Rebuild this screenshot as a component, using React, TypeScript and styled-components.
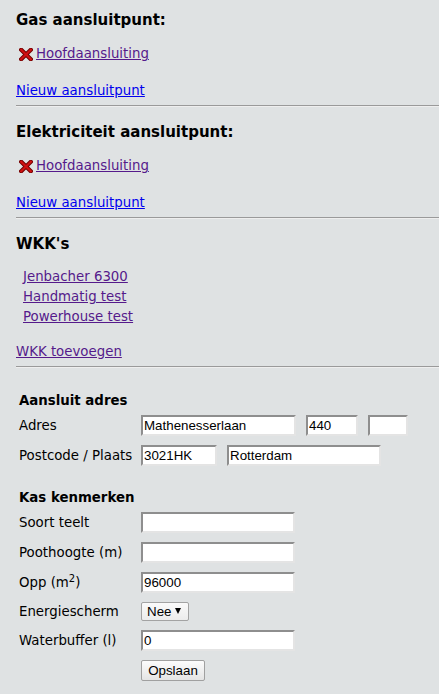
import React from 'react';
import styled, { createGlobalStyle } from 'styled-components';

const Global = createGlobalStyle`
  html, body { margin: 0; padding: 0; background: #dfe2e3; }
  body {
    font-family: "DejaVu Sans", Verdana, sans-serif;
    font-size: 13.33px;
    color: #000;
  }
`;

const Page = styled.div`
  display: flex;
  flex-direction: column;
  padding: 0 0 10px 16px;
  min-height: 694px;
  box-sizing: border-box;
  background: #dfe2e3;
`;

const SectionTitle = styled.h3<{ $first?: boolean }>`
  margin: ${(p) => (p.$first ? 11 : 16)}px 0 0;
  font-size: 15px;
  line-height: 18px;
  font-weight: bold;
`;

const Link = styled.a<{ $visited?: boolean }>`
  color: ${(p) => (p.$visited ? '#551a8b' : '#0000ee')};
  text-decoration: underline;
  cursor: pointer;
`;

const ItemRow = styled.div`
  margin-top: 17px;
  display: flex;
  align-items: flex-start;
  line-height: 15px;
  height: 15px;
`;

const DeleteIcon = styled.svg`
  width: 14px;
  height: 13px;
  margin: 2px 3px 0 3px;
  flex: none;
`;

const ActionLine = styled.div<{ $gap: number }>`
  margin-top: ${(p) => p.$gap}px;
  line-height: 15px;
`;

const Divider = styled.hr`
  margin: 7px 0 0;
  height: 0;
  border: 0;
  border-top: 1px solid #9a9a9a;
  border-bottom: 1px solid #eeeeee;
`;

const WkkList = styled.ul`
  list-style: none;
  margin: 14px 0 0;
  padding: 0 0 0 7px;
`;

const WkkItem = styled.li`
  line-height: 20px;
  height: 20px;
`;

const FormTitle = styled.div<{ $gap: number }>`
  margin: ${(p) => p.$gap}px 0 2px;
  padding-left: 3px;
  font-weight: bold;
  line-height: 15px;
`;

const FormRow = styled.div<{ $h?: number }>`
  display: grid;
  grid-template-columns: 122px 1fr;
  align-items: center;
  height: ${(p) => p.$h ?? 30}px;
  padding-left: 3px;
`;

const Label = styled.label`
  line-height: 15px;
  white-space: nowrap;
`;

const Sup = styled.sup`
  font-size: 10px;
  line-height: 0;
`;

const Controls = styled.div`
  display: flex;
  align-items: center;
  gap: 10px;
`;

const TextInput = styled.input<{ $w: number }>`
  box-sizing: border-box;
  width: ${(p) => p.$w}px;
  height: 21px;
  margin: 0;
  padding: 1px 1px;
  font-family: "Liberation Sans", Arial, sans-serif;
  font-size: 13.33px;
  color: #000;
  background: #fff;
  border: 2px solid;
  border-color: #8e8e8e #e4e4e4 #e4e4e4 #8e8e8e;
  outline: none;
`;

const SelectWrap = styled.div`
  position: relative;
  width: 48px;
  height: 19px;
`;

const Select = styled.select`
  appearance: none;
  -webkit-appearance: none;
  box-sizing: border-box;
  width: 48px;
  height: 19px;
  margin: 0;
  padding: 0 0 0 5px;
  font-family: "Liberation Sans", Arial, sans-serif;
  font-size: 13.33px;
  color: #000;
  border: 1px solid #a3a3a3;
  border-radius: 2px;
  background: linear-gradient(#fafafa, #ececec);
  outline: none;
`;

const SelectArrow = styled.span`
  position: absolute;
  right: 8px;
  top: 6px;
  width: 0;
  height: 0;
  border-left: 3px solid transparent;
  border-right: 3px solid transparent;
  border-top: 6px solid #000;
  pointer-events: none;
`;

const SaveButton = styled.button`
  box-sizing: border-box;
  width: 64px;
  height: 21px;
  margin: 0;
  padding: 0;
  font-family: "Liberation Sans", Arial, sans-serif;
  font-size: 13.33px;
  color: #000;
  border: 1px solid #a0a0a0;
  border-radius: 2px;
  background: linear-gradient(#fcfcfc, #e4e4e4);
`;

const RedCross = () => (
  <DeleteIcon viewBox="0 0 14 13">
    <path d="M2.2 1.8 L11.8 11.2 M11.8 1.8 L2.2 11.2" stroke="#6e0000" strokeWidth="4.2" strokeLinecap="square" />
    <path d="M2.2 1.8 L11.8 11.2 M11.8 1.8 L2.2 11.2" stroke="#cf1111" strokeWidth="2.3" strokeLinecap="square" />
  </DeleteIcon>
);

const ConnectionSection = ({ title, first }: { title: string; first?: boolean }) => (
  <>
    <SectionTitle $first={first}>{title}</SectionTitle>
    <ItemRow>
      <RedCross />
      <Link $visited>Hoofdaansluiting</Link>
    </ItemRow>
    <ActionLine $gap={22}>
      <Link>Nieuw aansluitpunt</Link>
    </ActionLine>
    <Divider />
  </>
);

export default function App() {
  return (
    <>
      <Global />
      <Page>
        <ConnectionSection title="Gas aansluitpunt:" first />
        <ConnectionSection title="Elektriciteit aansluitpunt:" />

        <SectionTitle>WKK's</SectionTitle>
        <WkkList>
          <WkkItem><Link $visited>Jenbacher 6300</Link></WkkItem>
          <WkkItem><Link $visited>Handmatig test</Link></WkkItem>
          <WkkItem><Link $visited>Powerhouse test</Link></WkkItem>
        </WkkList>
        <ActionLine $gap={17}>
          <Link $visited>WKK toevoegen</Link>
        </ActionLine>
        <Divider />

        <FormTitle $gap={25}>Aansluit adres</FormTitle>
        <FormRow>
          <Label>Adres</Label>
          <Controls>
            <TextInput $w={155} defaultValue="Mathenesserlaan" />
            <TextInput $w={52} defaultValue="440" />
            <TextInput $w={40} defaultValue="" />
          </Controls>
        </FormRow>
        <FormRow>
          <Label>Postcode / Plaats</Label>
          <Controls>
            <TextInput $w={76} defaultValue="3021HK" />
            <TextInput $w={154} defaultValue="Rotterdam" />
          </Controls>
        </FormRow>

        <FormTitle $gap={20}>Kas kenmerken</FormTitle>
        <FormRow>
          <Label>Soort teelt</Label>
          <Controls><TextInput $w={154} defaultValue="" /></Controls>
        </FormRow>
        <FormRow>
          <Label>Poothoogte (m)</Label>
          <Controls><TextInput $w={154} defaultValue="" /></Controls>
        </FormRow>
        <FormRow>
          <Label>Opp (m<Sup>2</Sup>)</Label>
          <Controls><TextInput $w={154} defaultValue="96000" /></Controls>
        </FormRow>
        <FormRow $h={28}>
          <Label>Energiescherm</Label>
          <Controls>
            <SelectWrap>
              <Select defaultValue="Nee">
                <option>Nee</option>
                <option>Ja</option>
              </Select>
              <SelectArrow />
            </SelectWrap>
          </Controls>
        </FormRow>
        <FormRow>
          <Label>Waterbuffer (l)</Label>
          <Controls><TextInput $w={154} defaultValue="0" /></Controls>
        </FormRow>
        <FormRow>
          <span />
          <Controls><SaveButton>Opslaan</SaveButton></Controls>
        </FormRow>
      </Page>
    </>
  );
}
